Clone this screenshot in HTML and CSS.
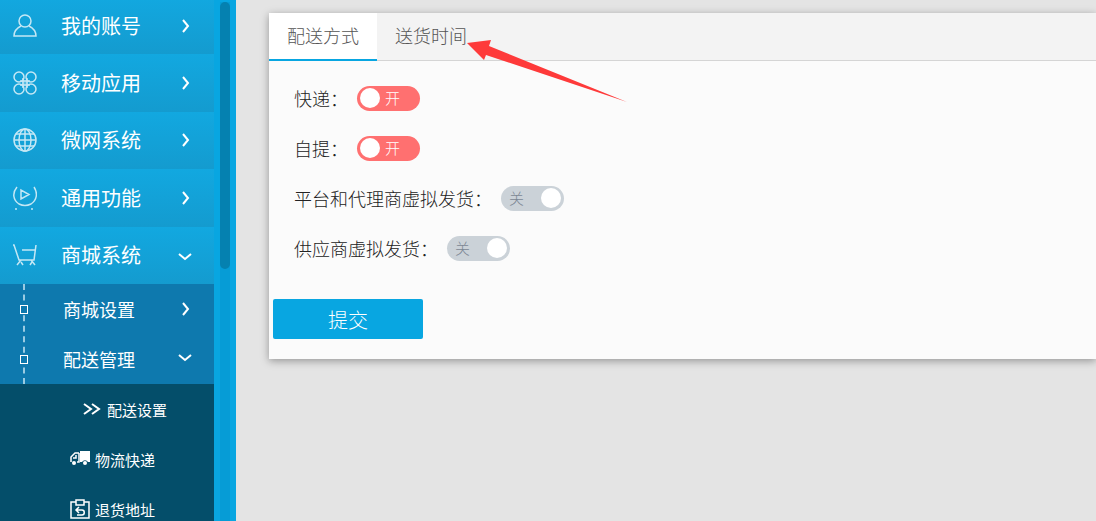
FILE: index.html
```html
<!DOCTYPE html>
<html lang="zh-CN">
<head>
  <meta charset="UTF-8">
  <meta name="viewport" content="width=device-width, initial-scale=1.0">
  <title>配送设置</title>
  <link rel="stylesheet" href="styles.css">
</head>
<body>
  <aside class="sidebar">
    <nav class="nav">
      <div class="menu">
        <a class="menu-item" href="#">
          <svg class="menu-icon" viewBox="0 0 24 24"><circle cx="12" cy="7" r="6"/><path d="M8 12C4 14 1 17 1 22H23C23 17 20 14 16 12"/></svg>
          <span>我的账号</span>
          <svg class="arrow" viewBox="0 0 14 14"><path d="M5 1L10 7L5 13"/></svg>
        </a>
        <a class="menu-item" href="#">
          <svg class="menu-icon" viewBox="0 0 24 24"><circle cx="6" cy="6" r="5"/><circle cx="18" cy="6" r="5"/><circle cx="6" cy="18" r="5"/><circle cx="18" cy="18" r="5"/><path class="haze" d="M9 9H15V15H9Z"/><path d="M10 7V17M14 7V17M7 10H17M7 14H17"/></svg>
          <span>移动应用</span>
          <svg class="arrow" viewBox="0 0 14 14"><path d="M5 1L10 7L5 13"/></svg>
        </a>
        <a class="menu-item" href="#">
          <svg class="menu-icon" viewBox="0 0 24 24"><circle cx="12" cy="12" r="11"/><ellipse cx="12" cy="12" rx="6" ry="11"/><path d="M12 1V23M1 12H23M3 6H21M3 18H21"/></svg>
          <span>微网系统</span>
          <svg class="arrow" viewBox="0 0 14 14"><path d="M5 1L10 7L5 13"/></svg>
        </a>
        <a class="menu-item" href="#">
          <svg class="menu-icon" viewBox="0 0 24 24"><path d="M4 1C-1 7 0 14 6 18C10 20 14 20 18 18C24 14 25 7 21 1M8 4V13L16 8.500ZM2 23H4M18 23H20"/></svg>
          <span>通用功能</span>
          <svg class="arrow" viewBox="0 0 14 14"><path d="M5 1L10 7L5 13"/></svg>
        </a>
        <a class="menu-item" href="#">
          <svg class="menu-icon" viewBox="0 0 24 24"><path d="M0 2H1L6 17H21L23 2M9 7H22M8 17L4 22M18 17L22 22M8 19L10 22M19 19L17 22"/></svg>
          <span>商城系统</span>
          <svg class="arrow" viewBox="0 0 14 14"><path d="M1 6L7 11L13 6"/></svg>
        </a>
      </div>
      <div class="submenu">
        <a class="submenu-item" href="#">
          <span>商城设置</span>
          <svg class="arrow" viewBox="0 0 14 14"><path d="M5 1L10 7L5 13"/></svg>
        </a>
        <a class="submenu-item" href="#">
          <span>配送管理</span>
          <svg class="arrow" viewBox="0 0 14 14"><path d="M1 3L7 8L13 3"/></svg>
        </a>
      </div>
      <div class="leafs">
        <a class="leaf indent" href="#">
          <svg class="leaf-icon chevrons" viewBox="0 0 20 20"><path d="M2 5L9 10L2 15M10 5L17 10L10 15"/></svg>
          <span>配送设置</span>
        </a>
        <a class="leaf" href="#">
          <svg class="leaf-icon" viewBox="0 0 20 20"><path class="block" d="M10 2H20V13H18A3.500 3.500 0 0 0 12 13H10Z"/><path d="M9 4H5L1 8V13M9 4V13H7M3 9H6V6"/><circle class="block" cx="4" cy="14" r="2"/><circle class="block" cx="15" cy="14" r="2"/></svg>
          <span>物流快递</span>
        </a>
        <a class="leaf" href="#">
          <svg class="leaf-icon" viewBox="0 0 20 20"><path d="M6 3H1V19H19V3H14M6 1H14V6H6ZM9 8L6 11L9 14M6 11H12C15 11 15 16 12 16H7"/></svg>
          <span>退货地址</span>
        </a>
      </div>
    </nav>
    <div class="scroll-track"><div class="scroll-thumb"></div></div>
  </aside>

  <main class="content">
    <form class="card">
      <div class="tabs">
        <button type="button" class="tab active">配送方式</button>
        <button type="button" class="tab">送货时间</button>
        <svg class="pointer" viewBox="0 0 162 64"><path d="M0 3L24 0L22 6L160 62L19 15L17 20Z"/></svg>
      </div>
      <div class="rows">
        <div class="row">
          <label for="express">快递：</label>
          <span class="switch"><input type="checkbox" id="express" checked><span class="state">开</span></span>
        </div>
        <div class="row">
          <label for="pickup">自提：</label>
          <span class="switch"><input type="checkbox" id="pickup" checked><span class="state">开</span></span>
        </div>
        <div class="row">
          <label for="agent">平台和代理商虚拟发货：</label>
          <span class="switch"><input type="checkbox" id="agent"><span class="state">关</span></span>
        </div>
        <div class="row">
          <label for="supplier">供应商虚拟发货：</label>
          <span class="switch"><input type="checkbox" id="supplier"><span class="state">关</span></span>
        </div>
      </div>
      <button type="submit" class="submit">提交</button>
    </form>
  </main>
</body>
</html>
```
FILE: styles.css
```css
* {
  box-sizing: border-box;
}
body {
  margin: 0;
  display: flex;
  height: 100vh;
  overflow: hidden;
  background-color: #e4e4e4;
  color: #222;
  font-family: "Noto Sans CJK SC", sans-serif;
  font-weight: 300;
}
a {
  color: #fff;
  text-decoration: none;
}
button {
  font: inherit;
  border: none;
  cursor: pointer;
}
svg {
  fill: none;
  stroke: #fff;
}

/* sidebar */
.sidebar {
  flex: none;
  display: flex;
  width: 236px;
  overflow: hidden;
  background-color: #08a6e1;
  font-weight: 400;
}
.nav {
  flex: 1;
  background-color: #044e6a;
}
.menu {
  display: grid;
  grid-template-rows: repeat(5, 1fr);
  height: 287px;
  margin-top: -3px;
}
.menu-item {
  display: flex;
  align-items: center;
  padding: 0 22px 0 13px;
  background-image: linear-gradient(#12a8e0, #149bcf);
  font-size: 20px;
  line-height: 30px;
}
.menu-icon {
  width: 24px;
  height: 24px;
  margin-right: 24px;
  opacity: 0.75;
  stroke-width: 1.5;
}
.haze {
  fill: #fff;
  fill-opacity: 0.4;
  stroke: none;
}
.arrow {
  width: 14px;
  height: 14px;
  margin-left: auto;
  stroke-width: 2;
}
.submenu {
  position: relative;
  background-color: #0e79ae;
}
.submenu::before {
  content: "";
  position: absolute;
  top: 0;
  bottom: 0;
  left: 23px;
  border-left: 2px dashed #9acbe2;
}
.submenu-item {
  display: flex;
  align-items: center;
  height: 50px;
  padding: 0 22px 0 20px;
  font-size: 18px;
}
.submenu-item::before {
  content: "";
  position: relative;
  box-sizing: border-box;
  width: 8px;
  height: 9px;
  margin-right: 35px;
  border: 1px solid #fff;
  background-color: #0e79ae;
}
.leaf {
  display: flex;
  align-items: center;
  gap: 5px;
  height: 50px;
  padding-left: 70px;
  font-size: 15px;
}
.leaf.indent {
  padding-left: 82px;
}
.leaf-icon {
  width: 20px;
  height: 20px;
  stroke-width: 1.5;
}
.chevrons {
  stroke-width: 2;
}
.block {
  fill: #fff;
  stroke: none;
}
.scroll-track {
  width: 10px;
  margin: 2px 6px 0;
  background-color: #069cd6;
}
.scroll-thumb {
  height: 267px;
  border-radius: 5px;
  background-color: #0581b0;
}

/* content */
.content {
  flex: 1;
  padding: 13px 0 0 33px;
}
.card {
  padding-bottom: 20px;
  background-color: #fbfbfb;
  box-shadow: 0 2px 8px rgba(0, 0, 0, 0.35);
}
.tabs {
  position: relative;
  display: flex;
  height: 48px;
  background-color: #f3f3f3;
  border-bottom: 1px solid #d5d5d5;
}
.tab {
  height: 48px;
  padding: 0 18px 4px;
  background: none;
  color: #555;
  font-size: 18px;
}
.tab.active {
  background-color: #fff;
  border-bottom: 2px solid #08a6e1;
  padding-bottom: 2px;
}
.pointer {
  position: absolute;
  top: 27px;
  left: 198px;
  width: 162px;
  height: 64px;
  fill: #fe3a3a;
  stroke: none;
}
.rows {
  padding: 12px 25px 0;
}
.row {
  display: flex;
  align-items: center;
  gap: 9px;
  height: 50px;
  font-size: 18px;
}
.switch {
  position: relative;
  width: 63px;
  height: 25px;
}
.switch input {
  appearance: none;
  display: flex;
  align-items: center;
  justify-content: flex-end;
  width: 100%;
  height: 100%;
  margin: 0;
  padding: 0 3px;
  border-radius: 13px;
  background-color: #cbd2d8;
  cursor: pointer;
}
.switch input::before {
  content: "";
  width: 20px;
  height: 20px;
  border-radius: 50%;
  background-color: #fff;
}
.switch input:checked {
  justify-content: flex-start;
  background-color: #ff7070;
}
.state {
  position: absolute;
  top: 0;
  left: 8px;
  color: #7b8794;
  font-size: 15px;
  line-height: 24px;
  pointer-events: none;
}
.switch input:checked + .state {
  left: 28px;
  color: #fff;
}
.submit {
  display: block;
  width: 150px;
  height: 40px;
  margin: 26px 0 0 4px;
  border-radius: 2px;
  background-color: #08a6e1;
  color: #fff;
  font-size: 20px;
  line-height: 40px;
}
```
